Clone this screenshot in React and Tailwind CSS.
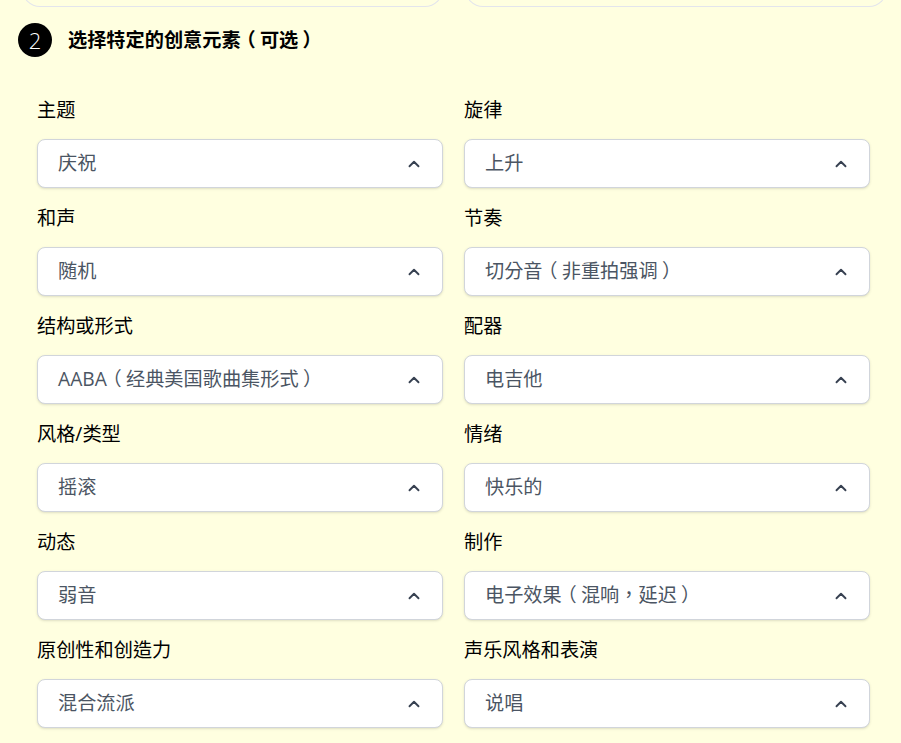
import { ChevronUp } from "lucide-react";

// Options shown in the second step of the song form — each field is a select
// with a preselected value, laid out two per row.
const fields = [
  { label: "主题", value: "庆祝" },
  { label: "旋律", value: "上升" },
  { label: "和声", value: "随机" },
  { label: "节奏", value: "切分音（非重拍强调）" },
  { label: "结构或形式", value: "AABA（经典美国歌曲集形式）" },
  { label: "配器", value: "电吉他" },
  { label: "风格/类型", value: "摇滚" },
  { label: "情绪", value: "快乐的" },
  { label: "动态", value: "弱音" },
  { label: "制作", value: "电子效果（混响，延迟）" },
  { label: "原创性和创造力", value: "混合流派" },
  { label: "声乐风格和表演", value: "说唱" },
];

// Full-width brackets sit centred in their em box in the design; the CJK
// font puts the ink on one side, so nudge each one back to the middle.
function CjkText({ text }) {
  return text.split(/([（）])/).map((part, i) => {
    if (part === "（")
      return (
        <span key={i} className="relative right-[0.22em]">
          {part}
        </span>
      );
    if (part === "）")
      return (
        <span key={i} className="relative left-[0.22em]">
          {part}
        </span>
      );
    return part;
  });
}

function Field({ label, value }) {
  return (
    <div className="flex flex-col">
      <label className="h-6 text-[19.2px] leading-6 text-black">{label}</label>
      <button
        type="button"
        className="mt-[17px] flex h-[49px] w-full items-center justify-between rounded-lg border border-[#d1d5db] bg-white pl-5 pr-[19px] text-left shadow-sm"
      >
        <span className="text-[19.2px] text-[#4b5563]">
          <CjkText text={value} />
        </span>
        <ChevronUp className="h-[18px] w-[18px] text-[#374151]" strokeWidth={2.5} />
      </button>
    </div>
  );
}

export default function App() {
  return (
    <div
      className="min-h-[743px] w-[901px] overflow-hidden bg-[#ffffe0]"
      style={{ fontFamily: '"Open Sans", "Noto Sans CJK TC", sans-serif' }}
    >
      {/* bottom edges of the step-1 cards, scrolled mostly out of view */}
      <div className="flex h-[7px] items-end overflow-hidden pl-[22px]">
        <div className="h-10 w-[421px] shrink-0 rounded-b-[18px] border border-t-0 border-[#e3e5ec]" />
        <div className="ml-[22px] h-10 w-[422px] shrink-0 rounded-b-[18px] border border-t-0 border-[#e3e5ec]" />
      </div>

      <div className="mt-4 flex items-center pl-[18px]">
        <div className="flex h-[34px] w-[34px] items-center justify-center rounded-full bg-black text-[22px] font-light text-white">
          2
        </div>
        <h2 className="ml-4 text-[19.2px] font-bold text-black">
          <CjkText text="选择特定的创意元素（可选）" />
        </h2>
      </div>

      <div className="ml-[37px] mt-[41px] grid w-[833px] grid-cols-2 gap-x-[21px] gap-y-[18px]">
        {fields.map((f) => (
          <Field key={f.label} label={f.label} value={f.value} />
        ))}
      </div>
    </div>
  );
}
